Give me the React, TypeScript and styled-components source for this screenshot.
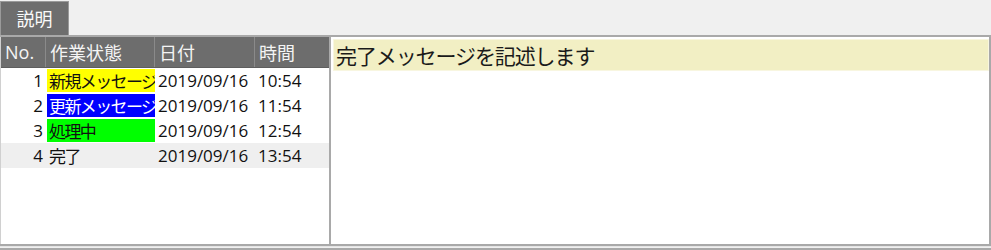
import React from "react";
import styled, { createGlobalStyle } from "styled-components";

type Row = { no: number, status: string, tone: "yellow" | "blue" | "green" | "none", date: string, time: string };

const rows: Row[] = [
    { no: 1, status: "新規メッセージ", tone: "yellow", date: "2019/09/16", time: "10:54" },
    { no: 2, status: "更新メッセージ", tone: "blue", date: "2019/09/16", time: "11:54" },
    { no: 3, status: "処理中", tone: "green", date: "2019/09/16", time: "12:54" },
    { no: 4, status: "完了", tone: "none", date: "2019/09/16", time: "13:54" }
];

const tones = {
    yellow: { bg: "#ffff00", fg: "#111" },
    blue: { bg: "#0000ff", fg: "#fff" },
    green: { bg: "#00ff00", fg: "#111" },
    none: { bg: "transparent", fg: "#111" }
};

const selectedRow = 4;

export default () => (
    <>
        <Global />
        <Host>
            <TabStrip>
                <Tab>説明</Tab>
            </TabStrip>
            <Panel>
                <ListPane>
                    <HeaderRow>
                        <HeadCell>No.</HeadCell>
                        <HeadCell>作業状態</HeadCell>
                        <HeadCell>日付</HeadCell>
                        <HeadCell $last>時間</HeadCell>
                    </HeaderRow>
                    {rows.map(r => (
                        <BodyRow key={r.no} $selected={r.no === selectedRow}>
                            <NoCell>{r.no}</NoCell>
                            <StatusCell $bg={tones[r.tone].bg} $fg={tones[r.tone].fg}>{r.status}</StatusCell>
                            <Cell>{r.date}</Cell>
                            <Cell>{r.time}</Cell>
                        </BodyRow>
                    ))}
                </ListPane>
                <DetailPane>
                    <Message>完了メッセージを記述します</Message>
                </DetailPane>
            </Panel>
            <Footer />
        </Host>
    </>
);

const Global = createGlobalStyle`
    html, body {
        margin: 0;
        padding: 0;
        background: #f0f0f0;
    }
    body {
        font-family: "Open Sans", "Noto Sans CJK JP", sans-serif;
    }
`;

const Host = styled.div`
    width: 991px;
    height: 250px;
    display: flex;
    flex-direction: column;
    background: #f0f0f0;
`;

const TabStrip = styled.div`
    height: 35px;
    display: flex;
    align-items: flex-end;
`;

const Tab = styled.div`
    width: 69px;
    height: 34px;
    background: #6e6e6e;
    border: 1px solid #9a9a9a;
    border-bottom: none;
    color: #fafafa;
    font-size: 18px;
    display: flex;
    align-items: center;
    justify-content: center;
    padding-bottom: 2px;
    box-sizing: border-box;
`;

const Panel = styled.div`
    height: 211px;
    display: flex;
    border-top: 2px solid #a9a9a9;
    border-right: 2px solid #a9a9a9;
    border-bottom: 2px solid #a9a9a9;
    box-sizing: border-box;
    background: #fff;
`;

const ListPane = styled.div`
    width: 331px;
    border-left: 1px solid #d0d0d0;
    border-right: 2px solid #a9a9a9;
    box-sizing: border-box;
    display: flex;
    flex-direction: column;
    background: #fff;
`;

const grid = `
    display: grid;
    grid-template-columns: 45px 109px 100px 1fr;
`;

const HeaderRow = styled.div`
    ${grid}
    height: 30px;
    background: #6d6d6d;
    border-bottom: 1px solid #5e5e5e;
`;

const HeadCell = styled.div<{ $last?: boolean }>`
    color: #f4f4f4;
    font-size: 18px;
    display: flex;
    align-items: center;
    padding-left: 4px;
    border-right: ${p => p.$last ? "none" : "1px solid #8a8a8a"};
`;

const BodyRow = styled.div<{ $selected?: boolean }>`
    ${grid}
    height: 25px;
    background: ${p => p.$selected ? "#efefef" : "#fff"};
    color: #111;
    font-size: 17px;
`;

const Cell = styled.div`
    display: flex;
    align-items: center;
    padding-left: 3px;
    white-space: nowrap;
`;

const NoCell = styled(Cell)`
    justify-content: flex-end;
    padding: 0 3px 0 0;
`;

const StatusCell = styled(Cell)<{ $bg: string, $fg: string }>`
    background: ${p => p.$bg};
    color: ${p => p.$fg};
    margin: 1px 0 1px 1px;
    padding-left: 2px;
    overflow: hidden;
    letter-spacing: -1.6px;
`;

const DetailPane = styled.div`
    flex: 1;
    padding: 3px 1px 0 3px;
    background: #fff;
`;

const Message = styled.div`
    height: 30px;
    background: #f2efc4;
    box-shadow: 0 0 0 1px #f8f6e0;
    color: #1a1a1a;
    font-size: 21px;
    letter-spacing: -1.1px;
    display: flex;
    align-items: center;
    padding-left: 2px;
`;

const Footer = styled.div`
    flex: 1;
    border-top: 1px solid #e4e4e4;
    border-bottom: 2px solid #a9a9a9;
    box-sizing: border-box;
`;
